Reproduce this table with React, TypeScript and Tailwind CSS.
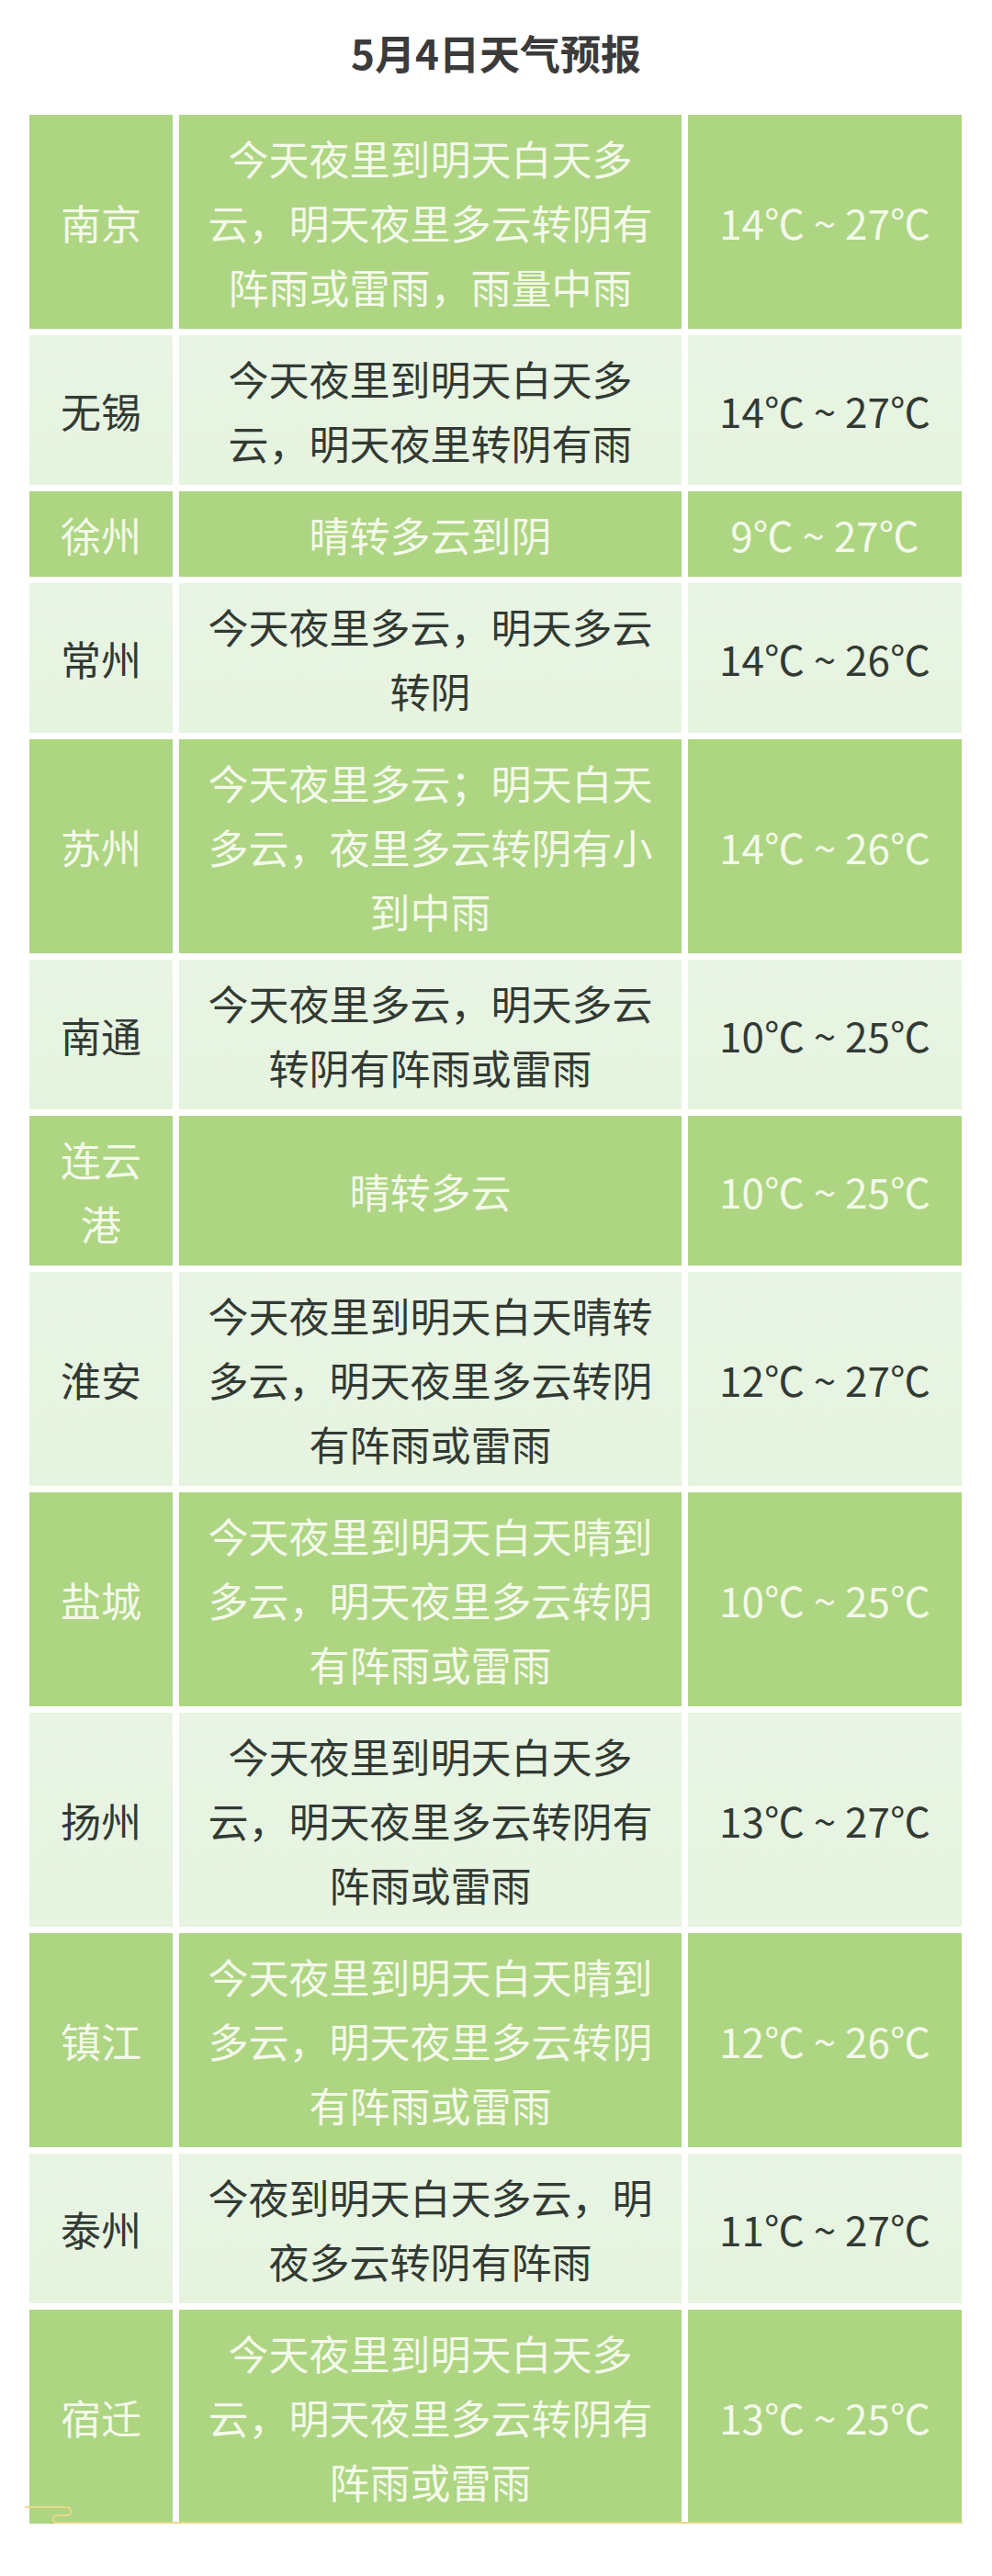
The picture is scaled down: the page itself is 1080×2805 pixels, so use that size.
const rows = [
  { city: "南京", desc: "今天夜里到明天白天多云，明天夜里多云转阴有阵雨或雷雨，雨量中雨", temp: "14℃ ~ 27℃" },
  { city: "无锡", desc: "今天夜里到明天白天多云，明天夜里转阴有雨", temp: "14℃ ~ 27℃" },
  { city: "徐州", desc: "晴转多云到阴", temp: "9℃ ~ 27℃" },
  { city: "常州", desc: "今天夜里多云，明天多云转阴", temp: "14℃ ~ 26℃" },
  { city: "苏州", desc: "今天夜里多云；明天白天多云，夜里多云转阴有小到中雨", temp: "14℃ ~ 26℃" },
  { city: "南通", desc: "今天夜里多云，明天多云转阴有阵雨或雷雨", temp: "10℃ ~ 25℃" },
  { city: "连云港", desc: "晴转多云", temp: "10℃ ~ 25℃" },
  { city: "淮安", desc: "今天夜里到明天白天晴转多云，明天夜里多云转阴有阵雨或雷雨", temp: "12℃ ~ 27℃" },
  { city: "盐城", desc: "今天夜里到明天白天晴到多云，明天夜里多云转阴有阵雨或雷雨", temp: "10℃ ~ 25℃" },
  { city: "扬州", desc: "今天夜里到明天白天多云，明天夜里多云转阴有阵雨或雷雨", temp: "13℃ ~ 27℃" },
  { city: "镇江", desc: "今天夜里到明天白天晴到多云，明天夜里多云转阴有阵雨或雷雨", temp: "12℃ ~ 26℃" },
  { city: "泰州", desc: "今夜到明天白天多云，明夜多云转阴有阵雨", temp: "11℃ ~ 27℃" },
  { city: "宿迁", desc: "今天夜里到明天白天多云，明天夜里多云转阴有阵雨或雷雨", temp: "13℃ ~ 25℃" },
];

const App = () => {
  return (
    <div
      className="w-[1080px] min-h-[2805px] bg-white"
      style={{ fontFamily: '"Noto Sans CJK SC", "Noto Sans", sans-serif' }}
    >
      {/* Title */}
      <h1 className="pt-[32px] text-center text-[44px] leading-[50px] font-bold text-[#3b3b3b]">
        5月4日天气预报
      </h1>

      {/* Table */}
      <div className="relative mx-[32px] mt-[43px]">
        <div className="grid grid-cols-[156px_547px_298px] gap-[7px] text-[44px] leading-[70px]">
          {rows.map((row, i) => {
            const dark = i % 2 === 0;
            const cell = dark
              ? "bg-[#add582] text-[#f4faea]"
              : "bg-gradient-to-b from-[#e9f5e4] to-[#e5f3df] text-[#323a34]";
            return [
              <div key={`c${i}`} className={`${cell} flex items-center justify-center text-center px-6 py-[11.5px]`}>
                {row.city}
              </div>,
              <div key={`d${i}`} className={`${cell} flex items-center justify-center text-center px-5 py-[11.5px]`}>
                {row.desc}
              </div>,
              <div key={`t${i}`} className={`${cell} flex items-center justify-center text-center px-2 py-[11.5px]`}>
                {row.temp}
              </div>,
            ];
          })}
        </div>

        {/* decorative ribbon at bottom */}
        <svg
          className="absolute left-[-5px] bottom-[-1px]"
          width="1025"
          height="20"
          viewBox="0 0 1025 20"
          fill="none"
        >
          <path
            d="M0 1 H45 Q50 1 50 6 Q50 10 45 10 H35 Q31 10 31 14 Q31 18 35 18 H1020"
            stroke="#ecd98a"
            strokeWidth="2"
            strokeLinecap="round"
          />
        </svg>
      </div>
    </div>
  );
};

export default App;
